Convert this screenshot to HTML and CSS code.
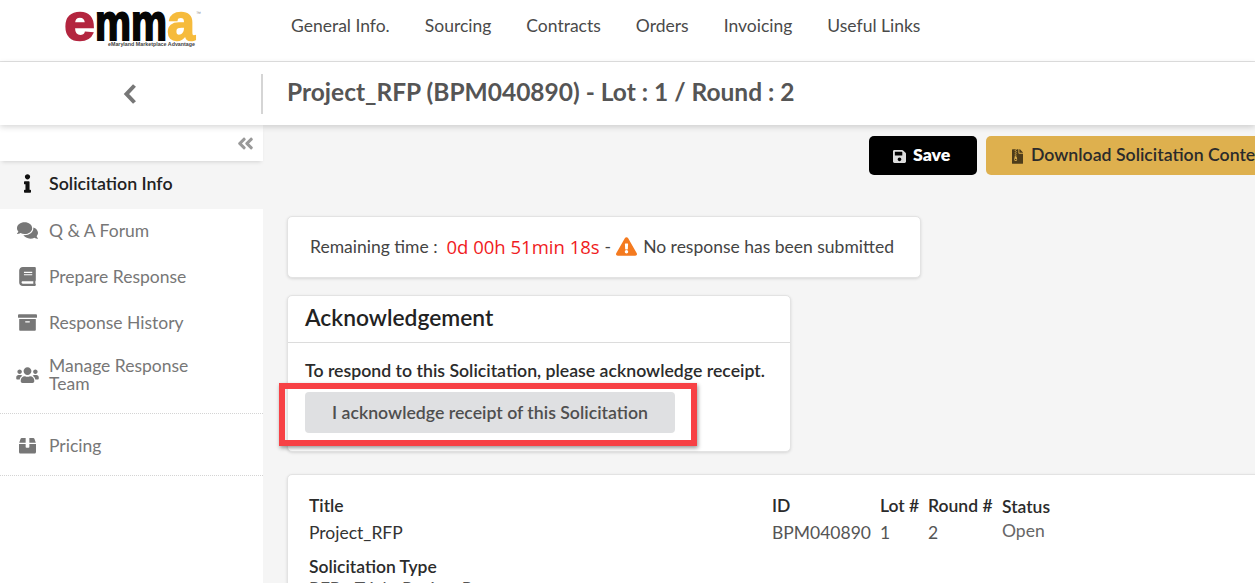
FILE: index.html
```html
<!DOCTYPE html>
<html lang="en">
<head>
<meta charset="utf-8">
<title>Project_RFP</title>
<link rel="stylesheet" href="styles.css">
</head>
<body>
<div class="page">
  <header class="topbar">
    <a class="logo">
      <svg class="logo-svg" width="140" height="50" viewBox="0 0 140 50">
        <text x="1" y="40" class="logo-e" textLength="31" lengthAdjust="spacingAndGlyphs">e</text>
        <text x="32" y="40" class="logo-m" textLength="72" lengthAdjust="spacingAndGlyphs">mm</text>
        <text x="104" y="40" class="logo-a" textLength="28" lengthAdjust="spacingAndGlyphs">a</text>
        <text x="133" y="15" class="logo-tm">™</text>
        <text x="45" y="45.500" class="logo-tag" textLength="87" lengthAdjust="spacingAndGlyphs">eMaryland Marketplace Advantage</text>
      </svg>
    </a>
    <nav class="nav">
      <a>General Info.</a><a>Sourcing</a><a>Contracts</a><a>Orders</a><a>Invoicing</a><a>Useful Links</a>
    </nav>
  </header>
  <div class="subbar">
    <div class="back">
      <svg class="back-icon" viewBox="0 0 14 22"><path d="M11.500 2.500 3.500 11l8 8.500"/></svg>
    </div>
    <h1 class="title">Project_RFP (BPM040890) - Lot : 1 / Round : 2</h1>
  </div>
  <div class="body">
    <aside class="sidebar">
      <div class="collapse">
        <svg class="ic-collapse" viewBox="0 0 448 512"><path d="M223.700 239l136-136c9.400-9.400 24.600-9.400 33.900 0l22.600 22.600c9.400 9.400 9.400 24.600 0 33.900L319.900 256l96.400 96.400c9.400 9.400 9.400 24.600 0 33.900L393.700 409c-9.400 9.400-24.600 9.400-33.900 0l-136-136c-9.500-9.400-9.500-24.600-.1-34zm-192 34l136 136c9.400 9.400 24.600 9.400 33.900 0l22.600-22.600c9.400-9.400 9.400-24.600 0-33.900L127.900 256l96.400-96.400c9.400-9.400 9.400-24.600 0-33.900L201.700 103c-9.400-9.400-24.600-9.400-33.900 0l-136 136c-9.500 9.400-9.500 24.600-.1 34z"/></svg>
      </div>
      <a class="item item-active">
        <span class="ic"><svg class="ic-info" viewBox="0 0 192 512"><path d="M20 424.229h20V279.771H20c-11.046 0-20-8.954-20-20V212c0-11.046 8.954-20 20-20h112c11.046 0 20 8.954 20 20v212.229h20c11.046 0 20 8.954 20 20V492c0 11.046-8.954 20-20 20H20c-11.046 0-20-8.954-20-20v-47.771c0-11.046 8.954-20 20-20zM96 0C56.235 0 24 32.235 24 72s32.235 72 72 72 72-32.235 72-72S135.764 0 96 0z"/></svg></span>
        <span>Solicitation Info</span>
      </a>
      <a class="item">
        <span class="ic"><svg class="ic-wide" viewBox="0 0 576 512"><path d="M416 192c0-88.400-93.100-160-208-160S0 103.600 0 192c0 34.300 14.100 65.900 38 92-13.400 30.200-35.500 54.200-35.800 54.500-2.200 2.300-2.800 5.700-1.500 8.700S4.800 352 8 352c36.600 0 66.900-12.300 88.700-25 32.200 15.700 70.300 25 111.300 25 114.900 0 208-71.600 208-160zm122 220c23.900-26 38-57.700 38-92 0-66.900-53.500-124.200-129.300-148.100.9 6.600 1.300 13.300 1.300 20.100 0 105.900-107.700 192-240 192-10.800 0-21.300-.8-31.700-1.900C207.800 439.600 281.800 480 368 480c41 0 79.100-9.200 111.300-25 21.800 12.700 52.100 25 88.700 25 3.200 0 6.100-1.900 7.300-4.800 1.300-2.900.7-6.300-1.500-8.700-.3-.3-22.400-24.200-35.800-54.500z"/></svg></span>
        <span>Q &amp; A Forum</span>
      </a>
      <a class="item">
        <span class="ic"><svg class="ic-book" viewBox="0 0 448 512"><path d="M448 360V24c0-13.300-10.700-24-24-24H96C43 0 0 43 0 96v320c0 53 43 96 96 96h328c13.300 0 24-10.700 24-24v-16c0-7.500-3.500-14.300-8.900-18.700-4.200-15.400-4.200-59.300 0-74.700 5.400-4.300 8.900-11.100 8.900-18.600zM128 134c0-3.300 2.700-6 6-6h212c3.300 0 6 2.700 6 6v20c0 3.300-2.700 6-6 6H134c-3.300 0-6-2.700-6-6v-20zm0 64c0-3.300 2.700-6 6-6h212c3.300 0 6 2.700 6 6v20c0 3.300-2.700 6-6 6H134c-3.300 0-6-2.700-6-6v-20zm253.400 250H96c-17.700 0-32-14.300-32-32 0-17.600 14.400-32 32-32h285.400c-1.900 17.100-1.900 46.900 0 64z"/></svg></span>
        <span>Prepare Response</span>
      </a>
      <a class="item">
        <span class="ic"><svg class="ic-archive" viewBox="0 0 512 512"><path d="M32 448c0 17.700 14.300 32 32 32h384c17.700 0 32-14.300 32-32V160H32v288zm160-212c0-6.600 5.400-12 12-12h104c6.600 0 12 5.400 12 12v8c0 6.600-5.400 12-12 12H204c-6.600 0-12-5.400-12-12v-8zM480 32H32C14.300 32 0 46.300 0 64v48c0 8.800 7.200 16 16 16h480c8.800 0 16-7.200 16-16V64c0-17.700-14.300-32-32-32z"/></svg></span>
        <span>Response History</span>
      </a>
      <a class="item item-team">
        <span class="ic"><svg class="ic-users" viewBox="0 0 640 512"><path d="M96 224c35.300 0 64-28.700 64-64s-28.700-64-64-64-64 28.700-64 64 28.700 64 64 64zm448 0c35.300 0 64-28.700 64-64s-28.700-64-64-64-64 28.700-64 64 28.700 64 64 64zm32 32h-64c-17.600 0-33.500 7.100-45.100 18.600 40.300 22.100 68.900 62 75.100 109.400h66c17.700 0 32-14.300 32-32v-32c0-35.300-28.700-64-64-64zm-256 0c61.900 0 112-50.100 112-112S381.900 32 320 32 208 82.100 208 144s50.100 112 112 112zm76.800 32h-8.300c-20.800 10-43.900 16-68.500 16s-47.600-6-68.500-16h-8.300C179.600 288 128 339.600 128 403.200V432c0 26.500 21.500 48 48 48h288c26.500 0 48-21.500 48-48v-28.800c0-63.600-51.600-115.200-115.200-115.200zm-223.700-13.400C161.500 263.100 145.600 256 128 256H64c-35.300 0-64 28.700-64 64v32c0 17.700 14.300 32 32 32h65.900c6.300-47.400 34.900-87.300 75.200-109.400z"/></svg></span>
        <span class="team-label">Manage Response Team</span>
      </a>
      <a class="item item-pricing">
        <span class="ic"><svg class="ic-pricing" viewBox="0 0 512 512"><path d="M0 210h200v90c0 12 10 22 22 22h68c12 0 22-10 22-22v-90h200v240c0 26.500-21.500 48-48 48H48c-26.500 0-48-21.500-48-48V210zM6 176 48 56c5-14 18-24 33-24h119v144H6zm500 0L464 56c-5-14-18-24-33-24H312v144h194z"/></svg></span>
        <span>Pricing</span>
      </a>
    </aside>
    <main class="main">
      <div class="actions">
        <button class="btn btn-save">
          <svg class="btn-ic" viewBox="0 0 448 512"><path d="M433.941 129.941l-83.882-83.882A48 48 0 0 0 316.118 32H48C21.490 32 0 53.490 0 80v352c0 26.510 21.490 48 48 48h352c26.510 0 48-21.490 48-48V163.882a48 48 0 0 0-14.059-33.941zM224 416c-35.346 0-64-28.654-64-64 0-35.346 28.654-64 64-64s64 28.654 64 64c0 35.346-28.654 64-64 64zm96-304.520V212c0 6.627-5.373 12-12 12H76c-6.627 0-12-5.373-12-12V108c0-6.627 5.373-12 12-12h228.520c3.183 0 6.235 1.264 8.485 3.515l3.480 3.480A11.996 11.996 0 0 1 320 111.480z"/></svg>
          <span>Save</span>
        </button>
        <button class="btn btn-download">
          <svg class="btn-ic btn-ic-zip" viewBox="0 0 384 512"><path d="M377 105L279.100 7c-4.500-4.500-10.600-7-17-7H256v128h128v-6.100c0-6.300-2.500-12.400-7-16.900zM128.400 336c-17.900 0-32.400 12.100-32.400 27 0 15 14.600 27 32.500 27s32.400-12.100 32.400-27-14.600-27-32.500-27zM224 136V0h-63.600v32h-32V0H24C10.700 0 0 10.700 0 24v464c0 13.300 10.700 24 24 24h336c13.300 0 24-10.700 24-24V160H248c-13.200 0-24-10.800-24-24zM95.900 32h32v32h-32V32zm32.300 384c-33.200 0-58-30.400-51.400-62.900L96.400 256v-32h32v-32h-32v-32h32v-32h-32V96h32V64h32v32h-32v32h32v32h-32v32h32v32h-32v32h22.100c5.700 0 10.700 4.100 11.800 9.700l17.300 87.700c6.400 32.400-18.400 62.600-51.400 62.600z"/></svg>
          <span>Download Solicitation Contents</span>
        </button>
      </div>
      <section class="card timer">
        <span class="timer-label">Remaining time :</span>
        <span class="timer-value">0d 00h 51min 18s</span>
        <span class="timer-dash">-</span>
        <svg class="warn" viewBox="0 0 576 512"><path d="M569.517 440.013C587.975 472.007 564.806 512 527.940 512H48.054c-36.937 0-59.999-40.055-41.577-71.987L246.423 24c18.467-32.009 64.720-31.951 83.154 0l239.940 416.013zM288 354c-25.405 0-46 20.595-46 46s20.595 46 46 46 46-20.595 46-46-20.595-46-46-46zm-43.673-165.346l7.418 136c.347 6.364 5.609 11.346 11.982 11.346h48.546c6.373 0 11.635-4.982 11.982-11.346l7.418-136c.375-6.874-5.098-12.654-11.982-12.654h-63.383c-6.884 0-12.356 5.780-11.981 12.654z"/></svg>
        <span>No response has been submitted</span>
      </section>
      <section class="card ack">
        <h2 class="ack-head">Acknowledgement</h2>
        <div class="ack-body">
          <p class="ack-text">To respond to this Solicitation, please acknowledge receipt.</p>
          <div class="ack-btn-wrap">
            <button class="ack-btn">I acknowledge receipt of this Solicitation</button>
            <div class="highlight"></div>
          </div>
        </div>
      </section>
      <section class="card details">
        <div class="cols">
          <div class="col col-title"><div class="lbl">Title</div><div class="val val-dark">Project_RFP</div></div>
          <div class="col col-id"><div class="lbl">ID</div><div class="val">BPM040890</div></div>
          <div class="col col-lot"><div class="lbl">Lot #</div><div class="val">1</div></div>
          <div class="col col-round"><div class="lbl">Round #</div><div class="val">2</div></div>
          <div class="col col-status"><div class="lbl lbl-status">Status</div><div class="val val-open">Open</div></div>
        </div>
        <div class="lbl lbl-type">Solicitation Type</div>
        <div class="val val-type">RFP - Trial - Review Request</div>
      </section>
    </main>
  </div>
</div>
</body>
</html>
```
FILE: styles.css
```css
* { box-sizing: border-box; }
html, body { margin: 0; padding: 0; height: 100%; overflow: hidden; }
body { font-family: Lato, "Open Sans", sans-serif; color: #212529; background: #f5f5f5; }
.page { width: 1255px; height: 583px; display: flex; flex-direction: column; overflow: hidden; }

.topbar { height: 62px; flex: none; display: flex; background: #fff; border-bottom: 1px solid #e2e2e2; }
.logo { width: 291px; flex: none; padding-left: 63px; }
.logo-svg { display: block; overflow: visible; }
.logo-e, .logo-m, .logo-a { font: 700 52px "Liberation Sans", sans-serif; }
.logo-e { fill: #b3253f; stroke: #b3253f; stroke-width: 1.500px; }
.logo-m { fill: #060606; stroke: #060606; stroke-width: 2px; }
.logo-a { fill: #f6bb3c; stroke: #f6bb3c; stroke-width: 1.500px; }
.logo-tm { font: 400 5px "Liberation Sans", sans-serif; fill: #888; }
.logo-tag { font: 700 5px "Liberation Sans", sans-serif; fill: #444; }
.nav { display: flex; gap: 35px; padding-top: 15px; font-size: 17.500px; line-height: 22px; color: #4a4a4a; }

.subbar { height: 63px; flex: none; display: flex; align-items: center; background: #fff; box-shadow: 0 2px 6px rgba(0,0,0,.16); position: relative; z-index: 3; }
.back { width: 263px; height: 40px; flex: none; display: flex; align-items: center; justify-content: center; border-right: 2px solid #d5d5d5; padding-right: 1px; }
.back-icon { width: 14px; height: 22px; fill: none; stroke: #777; stroke-width: 4; }
.title { margin: 0 0 3px; padding-left: 24px; font-size: 24.500px; line-height: 32px; font-weight: 700; color: #555; }

.body { flex: 1; display: flex; min-height: 0; }
.sidebar { width: 263px; flex: none; background: #fff; color: #777; font-size: 17.500px; }
.collapse { height: 36px; display: flex; justify-content: flex-end; align-items: center; padding-right: 9px; box-shadow: 0 3px 4px -2px rgba(0,0,0,.14); position: relative; }
.ic-collapse { width: 17px; height: 19px; fill: #999; }
.item { height: 46px; padding-bottom: 4px; display: flex; align-items: center; }
.item-active { height: 48px; padding-bottom: 4px; background: #f5f5f5; color: #222; font-size: 17.800px; font-weight: 600; }
.item-team { height: 67px; padding-bottom: 10px; border-bottom: 1px dotted #d4d4d4; line-height: 18px; }
.item-pricing { height: 62px; padding: 1px 0 0; border-bottom: 1px dotted #d4d4d4; }
.team-label { width: 170px; }
.ic { width: 49px; flex: none; display: flex; justify-content: center; padding-left: 5px; }
.ic svg { display: block; fill: #777; }
.ic .ic-info { width: 7px; height: 19px; fill: #111; }
.ic-wide { width: 21px; height: 19px; }
.ic-book { width: 17px; height: 19px; }
.ic-archive { width: 19px; height: 19px; }
.ic-pricing { width: 17px; height: 17px; }
.ic-users { width: 23px; height: 18px; }

.main { flex: 1; min-width: 0; padding: 11px 0 0 24px; overflow: hidden; display: flex; flex-direction: column; align-items: flex-start; }
.actions { display: flex; gap: 9px; margin-left: 582px; margin-bottom: 41px; flex: none; }
.btn { height: 39px; padding-bottom: 3px; border: 0; border-radius: 5px; display: flex; align-items: center; white-space: nowrap; font-family: inherit; font-size: 17.700px; font-weight: 700; flex: none; }
.btn-save { width: 108px; padding-left: 24px; justify-content: flex-start; gap: 7px; background: #000; color: #fff; font-weight: 800; }
.btn-download { width: 300px; padding-left: 26px; gap: 8px; background: #deb04e; color: #2b2b2b; font-weight: 600; }
.btn-ic { width: 13px; height: 15px; fill: #ddd; margin-top: 3px; }
.btn-ic-zip { width: 11px; fill: #4d3c1a; }

.card { background: #fff; border: 1px solid #e3e3e3; border-radius: 5px; box-shadow: 0 1px 3px rgba(0,0,0,.12); flex: none; }
.timer { width: 634px; height: 62px; padding: 0 0 2px 22px; display: flex; align-items: center; font-size: 17.500px; color: #444; margin-bottom: 17px; }
.timer-label { margin-right: 9px; }
.timer-value { color: #f01b22; font-family: "Open Sans", sans-serif; font-size: 18.500px; margin-right: 5px; }
.timer-dash { margin-right: 5px; }
.warn { width: 21px; height: 19px; fill: #f47a1f; margin-right: 6px; }

.ack { width: 504px; height: 157px; margin-bottom: 22px; }
.ack-head { margin: 0; height: 47px; padding: 7px 0 0 17px; border-bottom: 1px solid #dcdcdc; font-size: 22.800px; line-height: 28px; font-weight: 600; color: #222; }
.ack-body { padding: 17px 17px 0; }
.ack-text { margin: 0 0 10px; font-size: 17.700px; line-height: 22px; font-weight: 600; color: #2b2b2b; white-space: nowrap; }
.ack-btn-wrap { position: relative; width: 370px; }
.ack-btn { display: block; width: 370px; height: 41px; padding-bottom: 2px; border: 0; border-radius: 4px; background: #dfe0e2; color: #4f4f4f; font-family: inherit; font-size: 17.700px; font-weight: 600; }
.highlight { position: absolute; left: -26px; top: -9px; width: 418px; height: 63px; border: 6px solid #f74145; box-shadow: 1px 2px 4px rgba(0,0,0,.4); }

.details { width: 1100px; height: 140px; padding: 20px 0 0 21px; }
.cols { display: flex; }
.col-title { width: 463px; }
.col-id { width: 108px; }
.col-lot { width: 48px; }
.col-round { width: 74px; }
.lbl { font-size: 17.500px; line-height: 22px; font-weight: 600; color: #2b2b2b; }
.lbl-status { padding-top: 2px; line-height: 20px; }
.val { font-size: 17.500px; line-height: 22px; margin-top: 5px; color: #555; }
.val-dark { color: #333; }
.val-open { margin-top: 3px; color: #666; }
.lbl-type { margin-top: 12px; }
.val-type { margin-top: 0; color: #555; }
```
